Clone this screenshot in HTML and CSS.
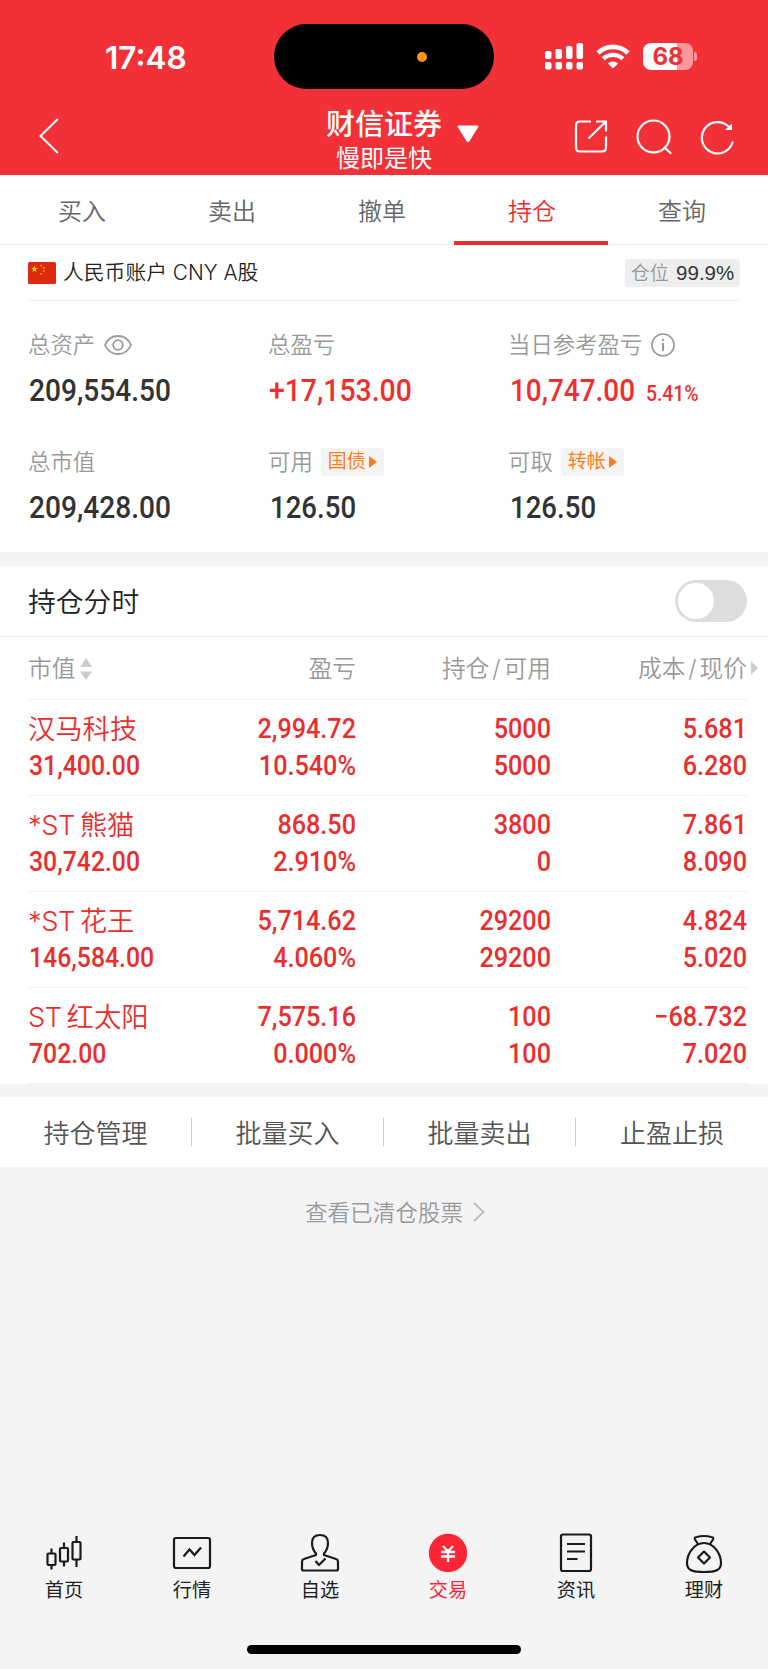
FILE: index.html
```html
<!DOCTYPE html>
<html lang="zh-CN">
<head>
    <meta charset="UTF-8">
    <meta name="viewport" content="width=device-width, initial-scale=1.0">
    <title>财信证券 - 持仓</title>
    <link rel="stylesheet" href="styles.css">
</head>
<body>

    <header class="header">
        <div class="status-bar">
            <div class="time">17:48</div>
            <div class="island"><span class="island-dot"></span></div>
            <div class="status-icons">
                <svg class="signal" width="38" height="27" viewBox="0 0 38 27" fill="#fff">
                    <rect x="0" y="8" width="6.5" height="8" rx="2"/>
                    <rect x="10.5" y="6" width="6.5" height="10" rx="2"/>
                    <rect x="21" y="3" width="6.5" height="13" rx="2"/>
                    <rect x="31.5" y="0" width="6.5" height="16" rx="2"/>
                    <rect x="0" y="19" width="6.5" height="7.5" rx="2"/>
                    <rect x="10.5" y="19" width="6.5" height="7.5" rx="2"/>
                    <rect x="21" y="19" width="6.5" height="7.5" rx="2"/>
                    <rect x="31.5" y="19" width="6.5" height="7.5" rx="2"/>
                </svg>
                <svg class="wifi" width="34" height="25" viewBox="0 0 34 25" fill="none" stroke="#fff">
                    <path d="M2 9 A21.5 21.5 0 0 1 32 9" stroke-width="4.6"/>
                    <path d="M7.3 14.8 A14 14 0 0 1 26.7 14.8" stroke-width="4.4"/>
                    <path d="M17 24.6 L11.9 19.6 A7.4 7.4 0 0 1 22.1 19.6 Z" fill="#fff" stroke="none"/>
                </svg>
                <div class="battery">68</div>
                <span class="battery-cap"></span>
            </div>
        </div>
        <div class="title-bar">
            <svg class="back" width="20" height="36" viewBox="0 0 20 36" fill="none" stroke="#fff" stroke-width="2" stroke-linecap="round">
                <path d="M18.3 1.5 L1.5 18 L18.3 34.5"/>
            </svg>
            <div class="titles">
                <h1>财信证券</h1>
                <p>慢即是快</p>
            </div>
            <svg class="drop" width="22" height="18" viewBox="0 0 22 18" fill="#fff">
                <path d="M2 0.5 H20 Q22 0.5 21 2.5 L12.3 16.5 Q11 18 9.7 16.5 L1 2.5 Q0 0.5 2 0.5 Z"/>
            </svg>
            <div class="tools">
                <svg width="34" height="36" viewBox="0 0 34 36" fill="none" stroke="#fff" stroke-width="2.2">
                    <path d="M17 2.5 H6 Q2 2.5 2 6.5 V28.5 Q2 32.5 6 32.5 H28 Q32 32.5 32 28.5 V17.5"/>
                    <path d="M22 2.5 H32 V12.5 M32 2.5 L14.5 19.5"/>
                </svg>
                <svg width="36" height="36" viewBox="0 0 36 36" fill="none" stroke="#fff" stroke-width="2.2" stroke-linecap="round">
                    <circle cx="17.5" cy="17.5" r="16"/>
                    <path d="M28.5 28.5 L34.5 34"/>
                </svg>
                <svg width="34" height="36" viewBox="0 0 34 36" fill="none" stroke="#fff" stroke-width="2.2" stroke-linecap="round">
                    <path d="M32.5 23.5 A15.7 15.7 0 1 1 28.5 7.5"/>
                    <path d="M32 4.5 V11 H25 Z" fill="#fff" stroke="none"/>
                </svg>
            </div>
        </div>
    </header>

    <nav class="tabs">
        <a class="tab">买入</a>
        <a class="tab">卖出</a>
        <a class="tab">撤单</a>
        <a class="tab active">持仓</a>
        <a class="tab">查询</a>
    </nav>

    <section class="summary">
        <div class="account">
            <svg class="flag" width="28" height="22" viewBox="0 0 28 22">
                <rect width="28" height="22" rx="1.5" fill="#de2910"/>
                <path d="M6.5 3.5 L7.3 6 H9.9 L7.8 7.6 L8.6 10.1 L6.5 8.6 L4.4 10.1 L5.2 7.6 L3.1 6 H5.7 Z" fill="#ffde00"/>
                <g fill="#f5a60a">
                    <circle cx="13" cy="3.5" r="1"/>
                    <circle cx="15.8" cy="5.7" r="1"/>
                    <circle cx="15.8" cy="9.3" r="1"/>
                    <circle cx="13" cy="12" r="1"/>
                </g>
            </svg>
            <span class="account-name">人民币账户 CNY A股</span>
            <span class="position">仓位 <b>99.9%</b></span>
        </div>
        <div class="assets">
            <div class="asset">
                <div class="label">总资产
                    <svg class="eye" width="28" height="20" viewBox="0 0 28 20" fill="none" stroke="#999" stroke-width="1.8">
                        <path d="M1 10 C6 -2 22 -2 27 10 C22 22 6 22 1 10 Z"/>
                        <circle cx="14" cy="10" r="4.8"/>
                    </svg>
                </div>
                <div class="value"><span class="num">209,554.50</span></div>
            </div>
            <div class="asset">
                <div class="label">总盈亏</div>
                <div class="value red"><span class="num plus">+17,153.00</span></div>
            </div>
            <div class="asset">
                <div class="label">当日参考盈亏
                    <svg class="info" width="24" height="24" viewBox="0 0 24 24" fill="none" stroke="#999" stroke-width="1.6">
                        <circle cx="12" cy="12" r="11"/>
                        <path d="M12 10 V18 M12 6 V8" stroke-width="2"/>
                    </svg>
                </div>
                <div class="value red"><span class="num today">10,747.00</span><span class="rate">5.41%</span></div>
            </div>
            <div class="asset">
                <div class="label">总市值</div>
                <div class="value"><span class="num">209,428.00</span></div>
            </div>
            <div class="asset">
                <div class="label">可用 <span class="tag">国债<i></i></span></div>
                <div class="value"><span class="num indent">126.50</span></div>
            </div>
            <div class="asset">
                <div class="label">可取 <span class="tag">转帐<i></i></span></div>
                <div class="value"><span class="num indent">126.50</span></div>
            </div>
        </div>
    </section>

    <section class="holdings">
        <div class="timeline">
            <h2>持仓分时</h2>
            <span class="switch"></span>
        </div>
        <div class="row head">
            <div>市值
                <svg class="sort" width="12" height="22" viewBox="0 0 12 22" fill="#ccc">
                    <path d="M6 0 L12 9 H0 Z M6 22 L12 13.5 H0 Z"/>
                </svg>
            </div>
            <div>盈亏</div>
            <div>持仓<em>/</em>可用</div>
            <div>成本<em>/</em>现价<i class="more"></i></div>
        </div>
        <div class="row">
            <div><span class="name">汉马科技</span><span class="num">31,400.00</span></div>
            <div><span class="num">2,994.72</span><span class="num">10.540%</span></div>
            <div><span class="num">5000</span><span class="num">5000</span></div>
            <div><span class="num">5.681</span><span class="num">6.280</span></div>
        </div>
        <div class="row">
            <div><span class="name"><em>*ST</em>熊猫</span><span class="num">30,742.00</span></div>
            <div><span class="num">868.50</span><span class="num">2.910%</span></div>
            <div><span class="num">3800</span><span class="num">0</span></div>
            <div><span class="num">7.861</span><span class="num">8.090</span></div>
        </div>
        <div class="row">
            <div><span class="name"><em>*ST</em>花王</span><span class="num">146,584.00</span></div>
            <div><span class="num">5,714.62</span><span class="num">4.060%</span></div>
            <div><span class="num">29200</span><span class="num">29200</span></div>
            <div><span class="num">4.824</span><span class="num">5.020</span></div>
        </div>
        <div class="row">
            <div><span class="name"><em>ST</em>红太阳</span><span class="num">702.00</span></div>
            <div><span class="num">7,575.16</span><span class="num">0.000%</span></div>
            <div><span class="num">100</span><span class="num">100</span></div>
            <div><span class="num">−68.732</span><span class="num">7.020</span></div>
        </div>
    </section>

    <div class="actions">
        <a>持仓管理</a>
        <a>批量买入</a>
        <a>批量卖出</a>
        <a>止盈止损</a>
    </div>

    <a class="cleared">查看已清仓股票
        <svg width="12" height="20" viewBox="0 0 12 20" fill="none" stroke="#bbb" stroke-width="1.8">
            <path d="M1 1 L10.5 10 L1 19"/>
        </svg>
    </a>

    <footer class="nav">
        <a class="nav-item">
            <svg width="40" height="40" viewBox="0 0 40 40" fill="none" stroke="#1a1a1a" stroke-width="2.2">
                <rect x="3.5" y="20.5" width="8" height="11.5" rx="1"/>
                <rect x="16" y="15" width="8" height="13.5" rx="1"/>
                <rect x="28.5" y="9" width="8" height="17.5" rx="1"/>
                <path d="M7.5 15.5 V20.5 M7.5 32 V36.5 M20 9.5 V15 M20 28.5 V33.5 M32.5 3 V9 M32.5 26.5 V34"/>
            </svg>
            <span>首页</span>
        </a>
        <a class="nav-item">
            <svg width="40" height="40" viewBox="0 0 40 40" fill="none" stroke="#1a1a1a" stroke-width="2.2">
                <rect x="2" y="5" width="36" height="30" rx="2"/>
                <path d="M11.5 23.5 L17.5 16.5 L22.5 22 L29 14.5"/>
            </svg>
            <span>行情</span>
        </a>
        <a class="nav-item">
            <svg width="40" height="40" viewBox="0 0 40 40" fill="none" stroke="#1a1a1a" stroke-width="2.2" stroke-linejoin="round">
                <path d="M16 20.5 Q12 16 12 10 Q12 2 20 2 Q28 2 28 10 Q28 16 24 20.5 V22 L36 26 Q38 26.7 38 28.5 V36 Q38 37.5 36.5 37.5 H3.5 Q2 37.5 2 36 V28.5 Q2 26.7 4 26 L16 22 Z"/>
                <path d="M15.5 28 L19 32 L25.5 25.5"/>
            </svg>
            <span>自选</span>
        </a>
        <a class="nav-item active">
            <svg width="40" height="40" viewBox="0 0 40 40" fill="none" stroke="#fff" stroke-width="2.4">
                <circle cx="20" cy="20" r="19.2" fill="#ff2436" stroke="none"/>
                <path d="M15 13 L20 18.5 L25 13 M13 19 H27 M13 23.5 H27 M20 18 V29"/>
            </svg>
            <span>交易</span>
        </a>
        <a class="nav-item">
            <svg width="40" height="40" viewBox="0 0 40 40" fill="none" stroke="#1a1a1a" stroke-width="2.2">
                <rect x="5" y="1.5" width="30" height="36.5" rx="2"/>
                <path d="M11 11 H29 M11 18.5 H29 M11 26 H21.5"/>
            </svg>
            <span>资讯</span>
        </a>
        <a class="nav-item">
            <svg width="40" height="40" viewBox="0 0 40 40" fill="none" stroke="#1a1a1a" stroke-width="2.2" stroke-linejoin="round">
                <path d="M14 11 L11 6.5 Q10 4.5 12.5 4 Q20 2 27.5 4 Q30 4.5 29 6.5 L26 11"/>
                <path d="M20 10 C30 10 37 21 37 30 C37 36.5 33 39 20 39 C7 39 3 36.5 3 30 C3 21 10 10 20 10 Z"/>
                <path d="M20 18.5 L26 24.5 L20 30.5 L14 24.5 Z"/>
            </svg>
            <span>理财</span>
        </a>
    </footer>
    <div class="home-bar"></div>

</body>
</html>
```
FILE: styles.css
```css
* {
    box-sizing: border-box;
}

body {
    width: 768px;
    height: 1669px;
    margin: 0;
    background-color: #f4f4f4;
    font-family: Inter, "Noto Sans CJK SC", sans-serif;
    font-weight: 350;
    color: #222;
    overflow: hidden;
    display: flex;
    flex-direction: column;
}

h1, h2, p {
    margin: 0;
    font-weight: 400;
}

em, i {
    font-style: normal;
}

svg {
    display: block;
    flex-shrink: 0;
}

/* header */
.header {
    height: 175px;
    background-color: #f23038;
    color: #fff;
}

.status-bar {
    height: 108px;
    padding: 24px 71px 0 0;
    display: flex;
}

.time {
    width: 274px;
    padding-left: 105px;
    line-height: 67px;
    font-size: 31.5px;
    font-weight: 600;
}

.island {
    width: 220px;
    height: 65px;
    border-radius: 33px;
    background-color: #000;
    display: flex;
    align-items: center;
    justify-content: flex-end;
    padding-right: 67px;
}

.island-dot {
    width: 10px;
    height: 10px;
    border-radius: 50%;
    background-color: #ff9500;
}

.status-icons {
    height: 65px;
    padding-left: 51px;
    display: flex;
    align-items: center;
}

.wifi {
    margin-left: 13px;
}

.battery {
    width: 50px;
    height: 27px;
    margin-left: 13px;
    border-radius: 8px;
    background: linear-gradient(to right, #fff 34px, #fa979b 34px);
    color: #f23038;
    font-size: 24px;
    font-weight: 700;
    line-height: 28px;
    text-align: center;
}

.battery-cap {
    width: 3px;
    height: 9px;
    margin-left: 1px;
    border-radius: 0 4px 4px 0;
    background-color: #fa979b;
}

.title-bar {
    height: 67px;
    padding-left: 39px;
    display: flex;
}

.back {
    margin-top: 10px;
}

.titles {
    width: 116px;
    margin-left: 267px;
    padding-top: 1px;
    text-align: center;
    white-space: nowrap;
}

.titles h1 {
    font-size: 29px;
    line-height: 32px;
    font-weight: 500;
}

.titles p {
    font-size: 24px;
    line-height: 36px;
}

.drop {
    margin: 17px 0 0 15px;
}

.tools {
    display: flex;
    gap: 28px;
    margin: 11px 0 0 95px;
}

/* tabs */
.tabs {
    height: 70px;
    padding-left: 7px;
    background-color: #fff;
    border-bottom: 1px solid #eee;
    display: flex;
}

.tab {
    position: relative;
    width: 150px;
    font-size: 24px;
    line-height: 73px;
    text-align: center;
    color: #666;
}

.tab.active {
    color: #ea2e2e;
}

.tab.active::after {
    content: "";
    position: absolute;
    left: -3px;
    bottom: -1px;
    width: 154px;
    height: 4px;
    background-color: #ea2e2e;
}

/* summary */
.summary {
    height: 307px;
    padding: 0 28px;
    background-color: #fff;
}

.account {
    height: 56px;
    border-bottom: 1px solid #eee;
    display: flex;
    align-items: center;
}

.account-name {
    margin-left: 7px;
    font-size: 20.8px;
    line-height: 56px;
}

.position {
    width: 115px;
    height: 28px;
    margin-left: auto;
    border-radius: 4px;
    background-color: #eee;
    color: #999;
    font-size: 19px;
    line-height: 28px;
    text-align: center;
    white-space: nowrap;
}

.position b {
    margin-left: 2px;
    font-family: "Liberation Sans", sans-serif;
    font-size: 20.5px;
    font-weight: 400;
    color: #333;
}

.assets {
    padding-top: 28px;
    display: grid;
    grid-template-columns: repeat(3, 240px);
    grid-auto-rows: 117px;
}

.label {
    height: 32px;
    font-size: 22.4px;
    line-height: 32px;
    color: #999;
    display: flex;
    align-items: center;
    white-space: nowrap;
}

.eye {
    margin-left: 9px;
}

.info {
    margin-left: 9px;
}

.tag {
    height: 28px;
    margin-left: 8px;
    padding: 0 7px;
    border-radius: 4px;
    background-color: #f4f4f4;
    color: #ff7d1a;
    font-size: 19px;
    line-height: 30px;
    font-weight: 400;
    display: flex;
    align-items: center;
}

.tag i {
    margin-left: 3px;
    border-left: 8px solid #ff7d1a;
    border-top: 6px solid transparent;
    border-bottom: 6px solid transparent;
}

.num,
.rate {
    display: block;
    font-family: Roboto, sans-serif;
    font-weight: 500;
    white-space: nowrap;
    transform: scaleX(0.9);
    transform-origin: left center;
}

.value {
    height: 40px;
    margin-top: 10px;
    font-size: 31px;
    line-height: 40px;
    color: #333;
    display: flex;
}

.value .num {
    margin-left: 1px;
    transform: scaleX(0.907);
}

.value.red {
    color: #ee2f32;
}

.value .plus {
    transform: scaleX(0.915);
}

.value .indent {
    margin-left: 2px;
    transform: scaleX(0.89);
}

.value .today {
    width: 136px;
    margin-left: 2px;
    transform: scaleX(0.9);
}

.rate {
    font-size: 21.5px;
    line-height: 46px;
}

/* holdings */
.holdings {
    margin-top: 14px;
    background-color: #fff;
}

.timeline {
    height: 71px;
    padding: 0 21px 0 28px;
    border-bottom: 1px solid #eee;
    display: flex;
    align-items: center;
    justify-content: space-between;
}

.timeline h2 {
    font-size: 27.8px;
    line-height: 72px;
    font-weight: 350;
    align-self: flex-start;
}

.switch {
    width: 72px;
    height: 42px;
    padding: 3px;
    border-radius: 21px;
    background-color: #ddd;
}

.switch::before {
    content: "";
    display: block;
    width: 36px;
    height: 36px;
    border-radius: 50%;
    background-color: #fff;
}

.row {
    height: 96px;
    margin: 0 21px 0 28px;
    padding-top: 10px;
    border-bottom: 1px solid #f0f0f0;
    display: grid;
    grid-template-columns: 180px 148px 195px 196px;
    font-size: 28px;
    line-height: 37px;
    color: #ea2e2e;
    text-align: right;
}

.row > div:first-child {
    text-align: left;
}

.row .num {
    transform-origin: right center;
}

.row > div:first-child .num {
    margin-left: 1px;
    transform: scaleX(0.885);
    transform-origin: left center;
}

.name {
    display: block;
    height: 37px;
    font-size: 27.3px;
    line-height: 40px;
    white-space: nowrap;
}

.name em {
    margin-right: 5px;
    letter-spacing: -0.5px;
}

.head {
    height: 63px;
    padding-top: 0;
    font-size: 23.7px;
    line-height: 64px;
    color: #999;
}

.head > div {
    position: relative;
}

.head > div:first-child {
    display: flex;
    align-items: center;
}

.head em {
    margin: 0 3px;
}

.sort {
    margin-left: 5px;
}

.more {
    position: absolute;
    right: -11px;
    top: 24px;
    border-left: 7px solid #ccc;
    border-top: 7px solid transparent;
    border-bottom: 7px solid transparent;
}

/* actions */
.actions {
    height: 70px;
    margin-top: 13px;
    background-color: #fff;
    display: flex;
    align-items: center;
}

.actions a {
    width: 192px;
    height: 28px;
    font-size: 26px;
    line-height: 31px;
    text-align: center;
    color: #555;
    border-right: 1px solid #ccc;
}

.actions a:last-child {
    border-right: none;
}

.cleared {
    height: 89px;
    padding-left: 22px;
    display: flex;
    align-items: center;
    justify-content: center;
    gap: 10px;
    font-size: 22.6px;
    color: #999;
}

/* bottom nav */
.nav {
    margin-top: auto;
    height: 80px;
    display: flex;
}

.nav-item {
    width: 128px;
    display: flex;
    flex-direction: column;
    align-items: center;
    font-size: 19.2px;
    line-height: 34px;
    font-weight: 400;
    color: #222;
}

.nav-item.active {
    color: #ff2436;
}

.home-bar {
    width: 274px;
    height: 9px;
    margin: 32px auto 15px;
    border-radius: 5px;
    background-color: #000;
    flex-shrink: 0;
}
```
